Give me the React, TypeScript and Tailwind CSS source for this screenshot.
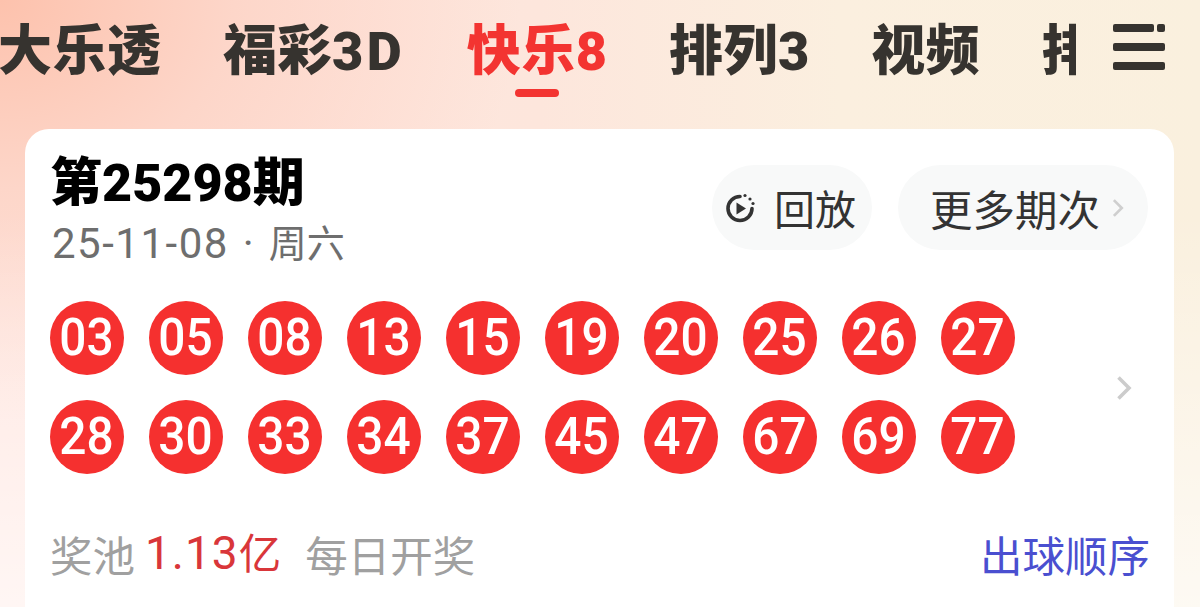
import React from 'react';

const cjk = "font-['Noto_Sans_CJK_SC','Noto_Sans',sans-serif]";
const mixed = "font-['Roboto','Noto_Sans_CJK_SC',sans-serif]";

const tabs = [
  { label: '大乐透' },
  { label: '福彩', wide: '3D' },
  { label: '快乐8', active: true },
  { label: '排列3' },
  { label: '视频' },
  { label: '排列5' },
];

const rows = [
  ['03', '05', '08', '13', '15', '19', '20', '25', '26', '27'],
  ['28', '30', '33', '34', '37', '45', '47', '67', '69', '77'],
];

function MenuIcon() {
  return (
    <svg width="52" height="46" viewBox="0 0 52 46" className="shrink-0">
      <rect x="0" y="0" width="41" height="8" rx="2" fill="#36332f" />
      <rect x="44" y="0" width="8" height="8" rx="2" fill="#36332f" />
      <rect x="0" y="19" width="52" height="8" rx="2" fill="#36332f" />
      <rect x="0" y="38" width="52" height="8" rx="2" fill="#36332f" />
    </svg>
  );
}

function ReplayIcon() {
  return (
    <svg width="32" height="32" viewBox="0 0 32 32" fill="none" className="shrink-0">
      <path d="M16 4.5A12 12 0 1 0 28 16.5" stroke="#333" strokeWidth="3.6" strokeLinecap="round" />
      <path d="M12.5 10.5v12l9.5-6z" fill="#333" />
      <circle cx="21" cy="3.5" r="1.6" fill="#333" />
      <circle cx="26" cy="7" r="1.6" fill="#333" />
      <circle cx="29" cy="11.5" r="1.6" fill="#333" />
    </svg>
  );
}

function Chevron({ className }: { className: string }) {
  return (
    <svg viewBox="0 0 16 26" fill="none" className={className}>
      <path d="M2.5 2.5L13 13L2.5 23.5" stroke="currentColor" strokeWidth="3.6" />
    </svg>
  );
}

export default function App() {
  return (
    <div className={`${cjk} h-[607px] w-[1200px] overflow-hidden bg-[linear-gradient(180deg,rgba(255,255,255,0)_35%,rgba(255,255,255,0.65)_100%),radial-gradient(ellipse_520px_420px_at_0px_0px,#fdc2ad_0%,#fdd6c9_45%,rgba(253,226,218,0)_100%),linear-gradient(90deg,#ffe6e0_0%,#fde6dc_45%,#fbefdf_70%,#faf0de_100%)]`}>
      {/* Tabs */}
      <div className="flex h-[129px] items-start">
        <div className="flex h-full w-[1076px] shrink-0 gap-[61.5px] overflow-hidden pt-[16px]">
          {tabs.map((t, i) => (
            <div key={t.label} className={`flex shrink-0 flex-col items-center ${i === 0 ? 'ml-[-2px]' : ''}`}>
              <span className={`${mixed} whitespace-nowrap text-[54px] font-black leading-[72px] tracking-[0.5px] ${t.active ? 'text-[#f33431]' : 'text-[#36332f]'}`}>
                {t.label}
                {t.wide && <span className="tracking-[3.5px]">{t.wide}</span>}
              </span>
              {t.active && <span className="mt-[1px] h-[8px] w-[44px] rounded-full bg-[#f33431]" />}
            </div>
          ))}
        </div>
        <div className="ml-[37px] pt-[24px]">
          <MenuIcon />
        </div>
      </div>

      {/* Card */}
      <div className="ml-[25px] mr-[26px] h-[500px] rounded-[24px] bg-white pl-[25px] pr-[26px]">
        <div className="flex items-start justify-between pt-[23px]">
          <div>
            <div className={`${mixed} text-[52px] font-black leading-[64px] text-black`}>第25298期</div>
            <div className={`${mixed} ml-[2px] mt-[5px] flex text-[42px] leading-[46px] text-[#6e6e6e]`}>
              <span className="tracking-[1.5px]">25-11-08</span>
              <span className="ml-[14px]">·</span>
              <span className="ml-[15px] text-[38px]">周六</span>
            </div>
          </div>
          <div className="mt-[13px] flex gap-[26px]">
            <div className="flex h-[85px] w-[160px] items-center rounded-full bg-[#f8f9f9] pl-[12px]">
              <ReplayIcon />
              <span className="ml-[18px] text-[41px] text-[#333]">回放</span>
            </div>
            <div className="flex h-[85px] w-[250px] items-center rounded-full bg-[#f8f9f9] pl-[32px]">
              <span className="text-[42.5px] text-[#333]">更多期次</span>
              <Chevron className="ml-[12px] h-[20px] w-[12px] text-[#cfcfcf]" />
            </div>
          </div>
        </div>

        <div className="mt-[34px] flex items-center justify-between">
          <div className="flex flex-col gap-[25px]">
            {rows.map((row, i) => (
              <div key={i} className="flex gap-[25px]">
                {row.map((n) => (
                  <div
                    key={n}
                    className="flex h-[74px] w-[74px] items-center justify-center rounded-full bg-[#f5302f] font-['Roboto',sans-serif] text-[52px] font-medium text-white"
                  >
                    <span className="inline-block scale-x-[0.92]">{n}</span>
                  </div>
                ))}
              </div>
            ))}
          </div>
          <Chevron className="mr-[16px] h-[26px] w-[16px] text-[#cccccc]" />
        </div>

        <div className="mt-[48px] flex items-center justify-between text-[42.5px] leading-[62px]">
          <div className="flex items-center text-[#a0a0a0]">
            <span>奖池</span>
            <span className={`${mixed} ml-[10px] text-[46px] text-[#d9363a]`}>
              <span className="tracking-[1px]">1.13</span>
              <span className="text-[42.5px]">亿</span>
            </span>
            <span className="ml-[24px]">每日开奖</span>
          </div>
          <span className="mr-[-2px] text-[#4a4fd0]">出球顺序</span>
        </div>
      </div>
    </div>
  );
}
